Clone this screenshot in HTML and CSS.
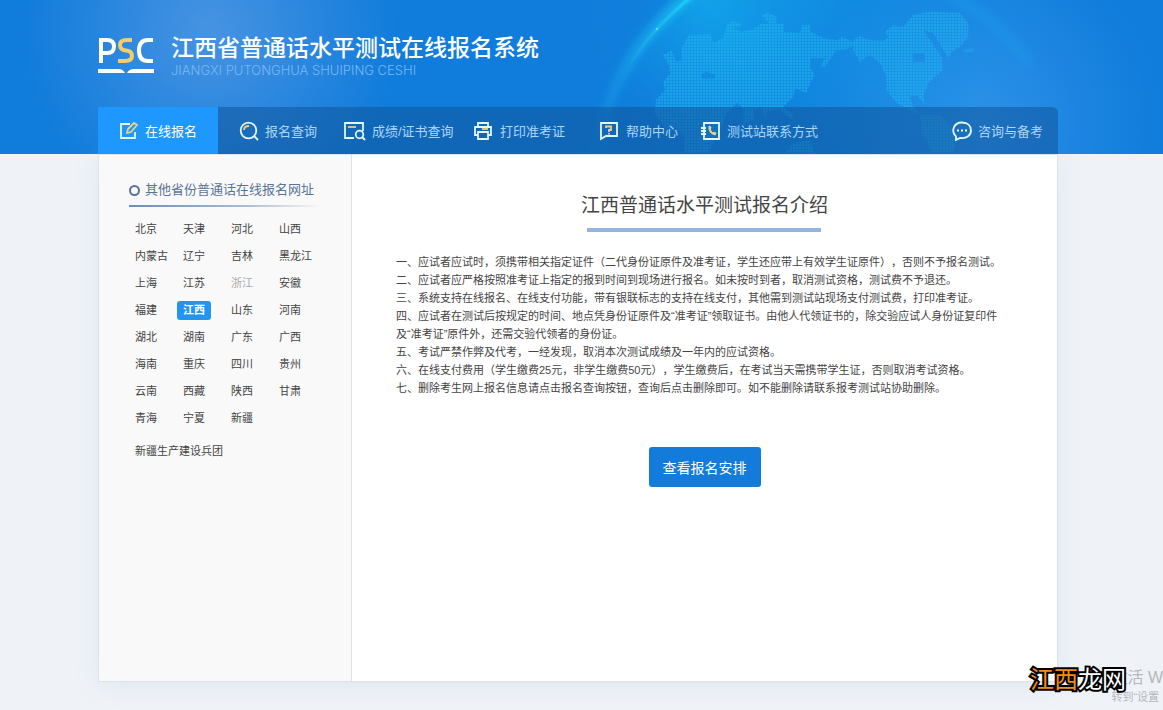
FILE: index.html
```html
<!DOCTYPE html>
<html lang="zh-CN">
<head>
<meta charset="utf-8">
<title>江西省普通话水平测试在线报名系统</title>
<link rel="stylesheet" href="styles.css">
</head>
<body>
<header class="header">
  <svg class="globe" width="600" height="154" viewBox="0 0 600 154" aria-hidden="true">
    <defs>
      <pattern id="dots" width="9" height="9" patternUnits="userSpaceOnUse"><rect width="7" height="7" fill="#20b8ef"/></pattern>
      <linearGradient id="rim" x1="0" y1="1" x2="1" y2="0"><stop offset="0" stop-color="#1cc4f4" stop-opacity=".1"/><stop offset=".5" stop-color="#1cc8f4" stop-opacity=".6"/><stop offset="1" stop-color="#1cd6fa"/></linearGradient>
      <radialGradient id="inner" cx="260" cy="0" r="240" gradientUnits="userSpaceOnUse"><stop offset="0" stop-color="#12a0ea" stop-opacity=".45"/><stop offset="1" stop-color="#12a0ea" stop-opacity="0"/></radialGradient>
      <radialGradient id="flare" cx="150" cy="0" r="130" gradientUnits="userSpaceOnUse"><stop offset="0" stop-color="#12c0f4" stop-opacity=".5"/><stop offset="1" stop-color="#12a8ee" stop-opacity="0"/></radialGradient>
      <filter id="soft" x="-30%" y="-30%" width="160%" height="160%"><feGaussianBlur stdDeviation="5"/></filter>
      <filter id="thin"><feGaussianBlur stdDeviation="1"/></filter>
    </defs>
    <circle cx="260" cy="0" r="240" fill="url(#inner)"/>
    <path d="M36 160Q46 62 130-2L290-2V160Z" fill="url(#flare)"/>
    <path d="M36 160Q46 62 132-8" fill="none" stroke="url(#rim)" stroke-width="10" opacity=".7" filter="url(#soft)"/>
    <path d="M70 65Q92 28 132-4" fill="none" stroke="url(#rim)" stroke-width="3" filter="url(#thin)"/>
    <path d="M380-10Q435 15 470 65" fill="none" stroke="#1ba5f0" stroke-width="10" opacity=".35" filter="url(#soft)"/>
    <circle cx="97" cy="29" r="1" fill="#7df"/>
    <g transform="translate(20 0) scale(.3333)" fill="url(#dots)" opacity=".6">
      <path d="M248 165L275 152 290 185 305 180 305 145 325 105 390 102 400 130 430 112 440 75 455 65 485 68 480 80 460 85 485 95 520 88 540 72 570 72 545 45 565 38 590 50 588 72 612 72 612 95 660 100 665 75 690 75 690 95 740 118 775 120 785 110 830 130 800 148 770 150 735 200 720 200 735 175 690 175 690 200 705 225 690 250 680 280 645 265 640 290 610 320 640 345 640 360 610 340 600 325 560 335 560 360 545 325 520 330 525 355 490 375 490 325 470 308 440 340 420 390 400 430 385 460 315 460 310 400 260 390 225 340 228 300 255 270 250 245 272 220 265 190ZM365 222V236H405V225L380 215Z" fill-rule="evenodd"/>
      <path d="M820 120L840 108 870 120 910 122 925 110 915 95 940 76 970 80 1000 45 1040 36 1140 38 1165 70 1165 110 1140 140 1120 150 1105 175 1085 140 1060 100 1030 90 1050 120 1085 170 1088 210 1045 250 1030 290 1035 315 1010 285 990 290 1000 320 1025 345 990 330 950 310 920 270 920 230 900 190 870 165 840 185 820 150ZM1000 160V185H1035V160Z" fill-rule="evenodd"/>
      <path d="M1145 150L1180 145V155L1155 157ZM1020 345H1080L1110 380 1130 420 1120 455H1055L1025 400ZM615 460L640 430 690 420 705 462Z"/>
    </g>
  </svg>
  <div class="brand">
    <svg class="logo" width="57" height="42" viewBox="0 0 57 42" role="img" aria-label="PSC">
      <g fill="none" stroke="#fff" stroke-width="4">
        <path d="M3 27V4H9Q16 4 16 10.500T9 17H4"/>
        <path d="M34 4H29Q22 4 22 9T28 14.500T34 20T27 25H20" stroke="#f3cf69"/>
        <path d="M55 4H50Q41 4 41 14.500T50 25H55"/>
      </g>
      <path d="M0 33H20Q25 33 27 37H0ZM56 33H36Q31 33 29 37H56Z" fill="#fff"/>
    </svg>
    <div class="titles">
      <h1 class="site-name">江西省普通话水平测试在线报名系统</h1>
      <p class="site-sub">JIANGXI PUTONGHUA SHUIPING CESHI</p>
    </div>
  </div>
  <nav class="nav">
    <a class="item active" href="#"><svg width="20" height="20" viewBox="0 0 20 20"><path d="M11 3H2V17H16V11" class="w"/><path d="M8 12L9 8 15 2 18 4 12 11Z" class="y"/></svg>在线报名</a>
    <a class="item" href="#"><svg width="20" height="20" viewBox="0 0 20 20"><circle cx="9.500" cy="9.500" r="7.800" class="w"/><path d="M15 15L19 19" class="w"/><path d="M5 9Q5 5 10 5" class="y"/></svg>报名查询</a>
    <a class="item" href="#"><svg width="22" height="20" viewBox="0 0 22 20"><path d="M10 17H1V2H19V10M18 16L21 19" class="w"/><circle cx="15.500" cy="13.500" r="3.800" class="w"/><path d="M4 6H12" class="y"/></svg>成绩/证书查询</a>
    <a class="item" href="#"><svg width="20" height="20" viewBox="0 0 20 20"><path d="M4 6V2H14V6M4 14H1V6H17V14H14M4 11H14V18H4Z" class="w"/><path d="M8 8H14" class="y"/></svg>打印准考证</a>
    <a class="item" href="#"><svg width="20" height="20" viewBox="0 0 20 20"><path d="M1 18V2H17V15H6Z" class="w"/><path d="M6 7V5.500H11V9H9V11M9 12V13.500" class="y"/></svg>帮助中心</a>
    <a class="item" href="#"><svg width="20" height="20" viewBox="0 0 20 20"><path d="M3 2H18V18H3ZM0 7H5M0 10H5M0 13H5" class="w"/><path d="M8 5Q7 12 14 14L15 12 13 11 12 12Q9 10 9.500 8L10 6Z" class="y phone"/></svg>测试站联系方式</a>
    <a class="item last" href="#"><svg width="20" height="20" viewBox="0 0 20 20"><path d="M4 19V15.500C-1 11 1 1.500 10 1.500C16 1.500 19 5 19 9.500C19 14 15 18 8 17Z" class="w"/><path d="M5 8.500H7V10.500H5ZM9 8.500H11V10.500H9ZM13 8.500H15V10.500H13Z" fill="#dff"/></svg>咨询与备考</a>
  </nav>
</header>
<main class="panel">
  <aside class="side">
    <h2 class="side-title"><span class="ring"></span>其他省份普通话在线报名网址</h2>
    <div class="areas">
      <a href="#">北京</a><a href="#">天津</a><a href="#">河北</a><a href="#">山西</a>
      <a href="#">内蒙古</a><a href="#">辽宁</a><a href="#">吉林</a><a href="#">黑龙江</a>
      <a href="#">上海</a><a href="#">江苏</a><a class="off" href="#">浙江</a><a href="#">安徽</a>
      <a href="#">福建</a><a class="current" href="#">江西</a><a href="#">山东</a><a href="#">河南</a>
      <a href="#">湖北</a><a href="#">湖南</a><a href="#">广东</a><a href="#">广西</a>
      <a href="#">海南</a><a href="#">重庆</a><a href="#">四川</a><a href="#">贵州</a>
      <a href="#">云南</a><a href="#">西藏</a><a href="#">陕西</a><a href="#">甘肃</a>
      <a href="#">青海</a><a href="#">宁夏</a><a href="#">新疆</a>
      <a class="full" href="#">新疆生产建设兵团</a>
    </div>
  </aside>
  <section class="content">
    <h2 class="title">江西普通话水平测试报名介绍</h2>
    <div class="rules">
      <p>一、应试者应试时，须携带相关指定证件（二代身份证原件及准考证，学生还应带上有效学生证原件），否则不予报名测试。</p>
      <p>二、应试者应严格按照准考证上指定的报到时间到现场进行报名。如未按时到者，取消测试资格，测试费不予退还。</p>
      <p>三、系统支持在线报名、在线支付功能，带有银联标志的支持在线支付，其他需到测试站现场支付测试费，打印准考证。</p>
      <p>四、应试者在测试后按规定的时间、地点凭身份证原件及“准考证”领取证书。由他人代领证书的，除交验应试人身份证复印件及“准考证”原件外，还需交验代领者的身份证。</p>
      <p>五、考试严禁作弊及代考，一经发现，取消本次测试成绩及一年内的应试资格。</p>
      <p>六、在线支付费用（学生缴费25元，非学生缴费50元），学生缴费后，在考试当天需携带学生证，否则取消考试资格。</p>
      <p>七、删除考生网上报名信息请点击报名查询按钮，查询后点击删除即可。如不能删除请联系报考测试站协助删除。</p>
    </div>
    <button class="view" type="button">查看报名安排</button>
  </section>
</main>
<div class="notice"><p class="notice-main">激活 W</p><p class="notice-sub">转到“设置</p></div>
<div class="mark"><span class="mark-hot">江西</span>龙网</div>
</body>
</html>
```

FILE: styles.css
```css
* { box-sizing: border-box; }
body {
  margin: 0;
  min-height: 100vh;
  display: flex;
  flex-direction: column;
  position: relative;
  overflow-x: hidden;
  background: #eff3f8;
  color: #444;
  font-family: "Liberation Sans", "Noto Sans CJK SC", sans-serif;
  text-spacing-trim: space-all;
}
h1, h2, p { margin: 0; font-weight: 400; }
a { color: inherit; text-decoration: none; }

.header {
  position: relative;
  padding: 34px 105px 0 98px;
  background:
    radial-gradient(circle at 210px 30px, #4793e2 0, rgba(71, 147, 226, 0) 190px),
    radial-gradient(circle at 980px 120px, #2d90e8 0, rgba(45, 144, 232, 0) 180px),
    #107cdb;
}
.globe { position: absolute; left: 560px; top: 0; }
.brand { position: relative; display: flex; gap: 16px; height: 73px; }
.logo { margin-top: 2px; }
.site-name { color: #fff; font-size: 23px; line-height: 28px; font-weight: 500; white-space: nowrap; }
.site-sub { color: #78b8f3; font-family: Inter, "Liberation Sans", sans-serif; font-size: 13px; font-weight: 300; line-height: 16px; white-space: nowrap; }

.nav {
  position: relative;
  display: grid;
  grid-template-columns: 120px 105px 130px 126px 101px 1fr auto;
  height: 47px;
  background: rgba(16, 86, 155, .55);
  border-radius: 0 6px 0 0;
}
.item {
  display: flex;
  align-items: center;
  gap: 6px;
  padding-left: 21px;
  color: #acd5f8;
  font-size: 13px;
  white-space: nowrap;
}
.item svg { flex: none; }
.active { background: #1e98ff; color: #fff; }
.last { padding: 0 15px 0 0; }
.w { fill: none; stroke: #e2f7ff; stroke-width: 1.8; }
.y { fill: none; stroke: #e8d282; stroke-width: 1.8; }
.phone { fill: #e8d282; stroke-width: 1; }

.panel {
  flex: 1;
  display: flex;
  margin: 0 105px 28px 98px;
  background: #fff;
  border: 1px solid #dde3ec;
  box-shadow: 0 4px 24px rgba(120, 145, 180, .12);
}
.side {
  flex: none;
  width: 253px;
  padding: 25px 30px 0;
  background: #f9f9f9;
  border-right: 1px solid #dde2e8;
}
.side-title {
  display: flex;
  align-items: center;
  gap: 5px;
  padding-bottom: 5px;
  border-bottom: 2px solid;
  border-image: linear-gradient(90deg, #6c8db5, #a9bbd1 60%, #f9f9f9) 1;
  color: #587498;
  font-size: 13px;
  line-height: 20px;
  white-space: nowrap;
}
.ring { width: 11px; height: 11px; border: 2px solid #587498; border-radius: 50%; }
.areas {
  display: grid;
  grid-template-columns: repeat(4, 48px);
  grid-auto-rows: 27px;
  align-items: center;
  justify-items: start;
  padding-top: 9px;
  font-size: 11px;
}
.areas a { padding: 0 6px; line-height: 19px; white-space: nowrap; }
.areas .off { color: #aaa; }
.areas .current { background: #2494f2; color: #fff; font-weight: 700; border-radius: 3px; }
.areas .full { grid-column: 1 / -1; padding-top: 12px; }

.content {
  flex: 1;
  display: flex;
  flex-direction: column;
  align-items: center;
  padding: 36px 44px 0;
}
.title { display: flex; flex-direction: column; align-items: center; color: #444; font-size: 19px; line-height: 29px; }
.title::after { content: ""; width: 234px; height: 4px; margin-top: 8px; background: #90b5e0; }
.rules { align-self: stretch; max-width: 610px; margin: 21px 0 50px; font-size: 11px; line-height: 18px; }
.view {
  width: 112px;
  height: 40px;
  padding: 0;
  border: 0;
  border-radius: 3px;
  background: #137cda;
  color: #fff;
  font: 14px "Liberation Sans", "Noto Sans CJK SC", sans-serif;
}

.notice {
  position: absolute;
  right: 0;
  bottom: 4px;
  color: #b4b7bb;
  white-space: nowrap;
}
.notice-main { font-size: 16px; line-height: 20px; }
.notice-sub { font-size: 11px; line-height: 18px; }
.mark {
  position: absolute;
  right: 37px;
  bottom: 14px;
  color: #fff;
  font-size: 24px;
  line-height: 32px;
  -webkit-text-stroke: 4px #000;
  paint-order: stroke fill;
}
.mark-hot { color: #f78a10; }
```
